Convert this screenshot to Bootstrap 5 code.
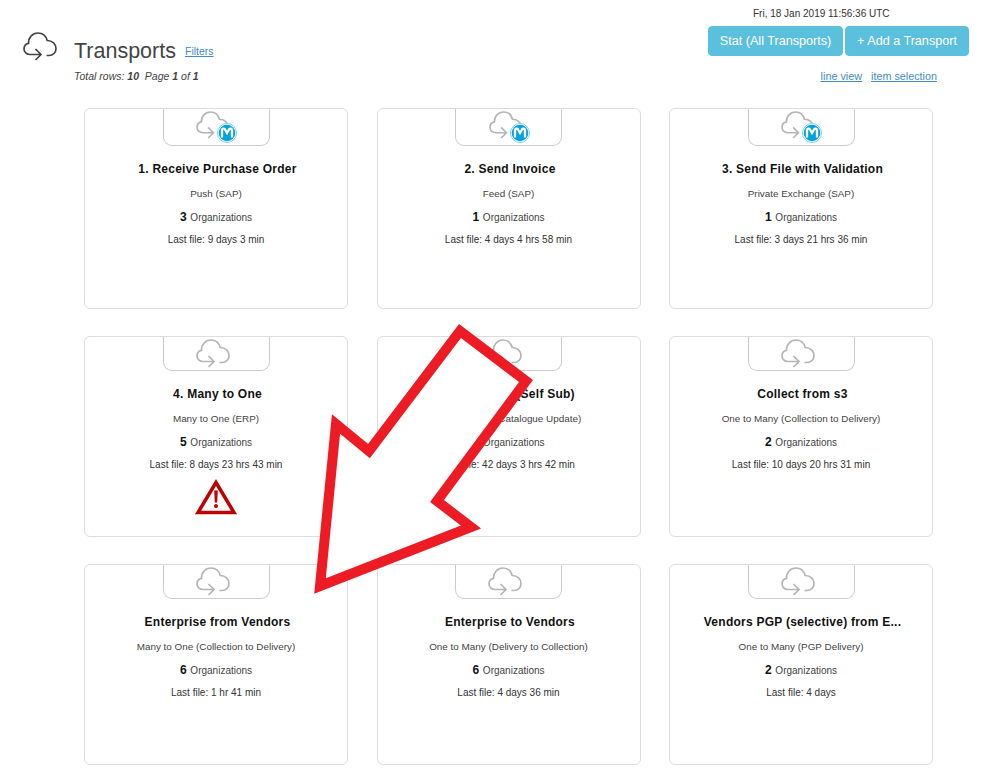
<!DOCTYPE html>
<html lang="en">
<head>
<meta charset="utf-8">
<title>Transports</title>
<link rel="stylesheet" href="https://cdn.jsdelivr.net/npm/bootstrap@5.3.0/dist/css/bootstrap.min.css">
<style>
html,body{height:779px;overflow:hidden}
body{font-family:"Liberation Sans",Arial,sans-serif;background:#fff;color:#333;position:relative}
a{color:#428bca}
.page-head{padding:7px 31px 0 22px;height:108px}
.head-icon{width:34px;height:29px;margin-top:25px;margin-left:1px;color:#444}
.head-title{font-size:21.5px;line-height:26px;color:#444;font-weight:400;margin:0}
.head-main{margin-left:17px;margin-top:31px}
.head-filter{font-size:10.5px;line-height:13px;margin-left:9px;margin-top:7px}
.head-meta{font-size:10.5px;font-style:italic;line-height:12px;margin-top:6px;color:#444}
.head-date{font-size:10px;line-height:13px;color:#333;text-align:center;margin-left:45px;width:134px;white-space:nowrap}
.head-right{width:261px}
.head-btn{background:#5bc0de;border:1px solid #5bc0de;color:#fff;font-size:12.6px;line-height:20px;padding:4px 0;border-radius:4px;height:30px}
.head-btn:hover{background:#5bc0de;color:#fff}
.head-gap{margin-top:6px}
.btn-stat{width:135px}
.btn-add{width:124px}
.head-links{font-size:10.8px;line-height:13px;margin-top:14px;margin-right:32px;gap:9px}
.tiles{display:grid;grid-template-columns:264px 264px 264px;column-gap:28.5px;row-gap:27px;padding-left:84px}
.tile{height:201px;border:1px solid #ddd;border-radius:6px;text-align:center;align-items:center}
.tab-box{width:107px;height:34px;border:1px solid #ccc;border-top:0;border-radius:0 0 9px 9px;display:flex;align-items:center;justify-content:center}
.tile-mule .tab-box{height:37px}
.tab-box svg{display:block}
.cloud-mark{margin-right:7px}
.tile-name{font-size:12px;font-weight:700;line-height:15px;color:#111;margin-top:16px;margin-left:3px;letter-spacing:.25px;width:236px;white-space:nowrap;overflow:hidden;text-overflow:ellipsis}
.tile-sub{font-size:9.9px;line-height:12px;margin-top:11px;color:#444}
.tile-org{font-size:10px;line-height:14px;margin-top:10px;color:#444}
.tile-org b{font-size:12px;color:#111;margin-right:1px}
.tile-last{font-size:10px;line-height:12px;margin-top:9px;color:#333}
.warn-mark{margin-top:8px;display:block}
.big-arrow{position:absolute;left:0;top:0;pointer-events:none}
</style>
</head>
<body>
<svg width="0" height="0" class="position-absolute">
<defs>
<symbol id="cloud" viewBox="0 0 34 29">
<path d="M17.500 22.500H7C3.500 22.500 1 20 1 17C1 14 3 11.800 5.500 11.300C5.300 5.500 9.500 1 15 1C19.500 1 23 4 24.200 8.500C29.500 8.500 33 12 33 16.500C33 20.500 30 23.500 26 23.500H23.500M12.500 17L18 22.500L12.500 28" fill="none" stroke="currentColor" stroke-width="1.700"/>
</symbol>
<symbol id="mule" viewBox="0 0 42 32">
<use href="#cloud" x="1" y="0" width="33" height="28" color="#b5b5b5"/>
<circle cx="32" cy="22" r="10" fill="#fff"/>
<circle cx="32" cy="22" r="9.500" fill="none" stroke="#7fd0f0" stroke-width="1"/>
<circle cx="32" cy="22" r="8.300" fill="#00a2df"/>
<path d="M27 26.500V19.500C27 17.500 29 17 30 18.500L32 22L34 18.500C35 17 37 17.500 37 19.500V26.500" fill="none" stroke="#fff" stroke-width="2.300"/>
</symbol>
</defs>
</svg>

<header class="page-head d-flex justify-content-between">
  <div class="d-flex">
    <svg class="head-icon"><use href="#cloud"/></svg>
    <div class="head-main">
      <div class="d-flex align-items-start"><h1 class="head-title">Transports</h1><a class="head-filter" href="#">Filters</a></div>
      <div class="head-meta">Total rows: <b>10</b>&nbsp; Page <b>1</b> of <b>1</b></div>
    </div>
  </div>
  <div class="head-right">
    <div class="head-date">Fri, 18 Jan 2019 11:56:36 UTC</div>
    <div class="d-flex justify-content-between head-gap"><a href="#" class="btn head-btn btn-stat">Stat (All Transports)</a><a href="#" class="btn head-btn btn-add">+ Add a Transport</a></div>
    <div class="head-links d-flex justify-content-end"><a href="#">line view</a><a href="#">item selection</a></div>
  </div>
</header>

<main class="tiles">
  <div class="card tile tile-mule"><div class="tab-box"><svg width="42" height="32"><use href="#mule"/></svg></div><div class="tile-name">1. Receive Purchase Order</div><div class="tile-sub">Push (SAP)</div><div class="tile-org"><b>3</b> Organizations</div><div class="tile-last">Last file: 9 days 3 min</div></div>
  <div class="card tile tile-mule"><div class="tab-box"><svg width="42" height="32"><use href="#mule"/></svg></div><div class="tile-name">2. Send Invoice</div><div class="tile-sub">Feed (SAP)</div><div class="tile-org"><b>1</b> Organizations</div><div class="tile-last">Last file: 4 days 4 hrs 58 min</div></div>
  <div class="card tile tile-mule"><div class="tab-box"><svg width="42" height="32"><use href="#mule"/></svg></div><div class="tile-name">3. Send File with Validation</div><div class="tile-sub">Private Exchange (SAP)</div><div class="tile-org"><b>1</b> Organizations</div><div class="tile-last">Last file: 3 days 21 hrs 36 min</div></div>

  <div class="card tile"><div class="tab-box"><svg class="cloud-mark" width="34" height="29" color="#b5b5b5"><use href="#cloud"/></svg></div><div class="tile-name">4. Many to One</div><div class="tile-sub">Many to One (ERP)</div><div class="tile-org"><b>5</b> Organizations</div><div class="tile-last">Last file: 8 days 23 hrs 43 min</div>
    <svg class="warn-mark" width="44" height="36" viewBox="0 0 44 36"><path d="M22 3.500L40 33.500H4Z" fill="#fff" stroke="#c00000" stroke-width="3.500"/><path d="M20.200 11.500H23.800L23.200 23.500H20.800Z" fill="#c00000"/><circle cx="22" cy="27" r="2" fill="#c00000"/></svg>
  </div>
  <div class="card tile"><div class="tab-box"><svg class="cloud-mark" width="34" height="29" color="#b5b5b5"><use href="#cloud"/></svg></div><div class="tile-name">5. Catalog - (Self Sub)</div><div class="tile-sub">One to Many (Catalogue Update)</div><div class="tile-org"><b>1</b> Organizations</div><div class="tile-last">Last file: 42 days 3 hrs 42 min</div></div>
  <div class="card tile"><div class="tab-box"><svg class="cloud-mark" width="34" height="29" color="#b5b5b5"><use href="#cloud"/></svg></div><div class="tile-name">Collect from s3</div><div class="tile-sub">One to Many (Collection to Delivery)</div><div class="tile-org"><b>2</b> Organizations</div><div class="tile-last">Last file: 10 days 20 hrs 31 min</div></div>

  <div class="card tile"><div class="tab-box"><svg class="cloud-mark" width="34" height="29" color="#b5b5b5"><use href="#cloud"/></svg></div><div class="tile-name">Enterprise from Vendors</div><div class="tile-sub">Many to One (Collection to Delivery)</div><div class="tile-org"><b>6</b> Organizations</div><div class="tile-last">Last file: 1 hr 41 min</div></div>
  <div class="card tile"><div class="tab-box"><svg class="cloud-mark" width="34" height="29" color="#b5b5b5"><use href="#cloud"/></svg></div><div class="tile-name">Enterprise to Vendors</div><div class="tile-sub">One to Many (Delivery to Collection)</div><div class="tile-org"><b>6</b> Organizations</div><div class="tile-last">Last file: 4 days 36 min</div></div>
  <div class="card tile"><div class="tab-box"><svg class="cloud-mark" width="34" height="29" color="#b5b5b5"><use href="#cloud"/></svg></div><div class="tile-name">Vendors PGP (selective) from E...</div><div class="tile-sub">One to Many (PGP Delivery)</div><div class="tile-org"><b>2</b> Organizations</div><div class="tile-last">Last file: 4 days</div></div>
</main>

<svg class="big-arrow" width="1000" height="779"><polygon points="460,331 526,381 437,501 471,527 320,586 336,424 369,451" fill="#fff" stroke="#ed1c24" stroke-width="10" stroke-linejoin="miter" stroke-miterlimit="10"/></svg>
</body>
</html>
